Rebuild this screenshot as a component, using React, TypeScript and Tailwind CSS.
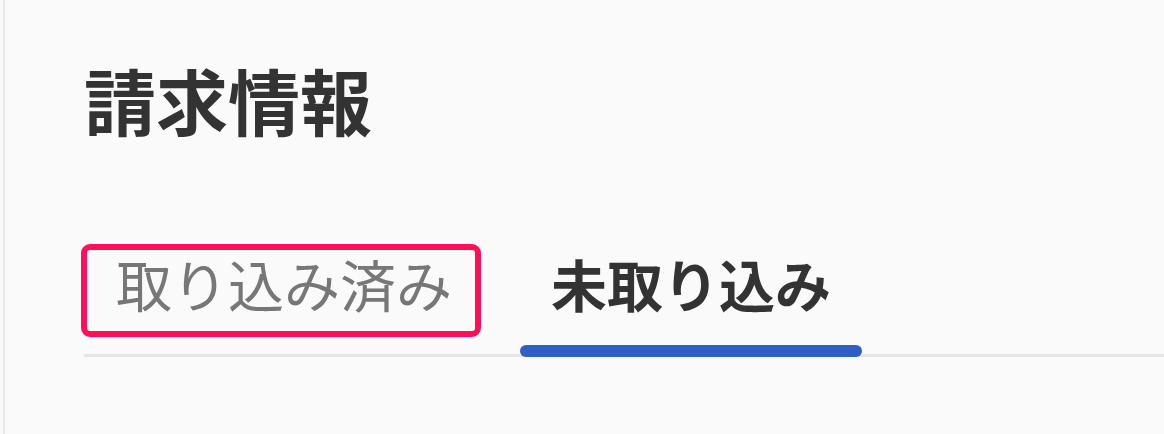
import React, { useState } from 'react';

const tabs = ['取り込み済み', '未取り込み'];

export default function App() {
  const [active, setActive] = useState(1);

  return (
    <div
      className="h-[434px] w-full bg-[#fafafa] overflow-hidden"
      style={{ fontFamily: '"Noto Sans CJK JP", "Noto Sans", sans-serif' }}
    >
      <div className="ml-[3px] h-full border-l-2 border-[#ebebeb] pl-[79px] pt-[63px]">
        <h1 className="text-[72px] font-bold leading-none text-[#333333]">請求情報</h1>

        <div className="mt-[109px] flex items-end border-b-[3px] border-[#e6e6e6]">
          {tabs.map((label, i) => {
            const selected = i === active;
            if (i === 0) {
              // highlighted tab with the red frame
              return (
                <button
                  key={label}
                  onClick={() => setActive(i)}
                  className="-ml-[3px] mb-[17px] rounded-[9px] border-[6px] border-[#ff0f57] pt-[5px] pb-[20px] pl-[29px] pr-[23px] text-[56px] leading-none text-[#777777]"
                >
                  {label}
                </button>
              );
            }
            return (
              <button
                key={label}
                onClick={() => setActive(i)}
                className="ml-[39px] -mb-[3px] flex flex-col"
              >
                <span
                  className={
                    'px-[31px] text-[56px] leading-none ' +
                    (selected ? 'font-bold text-[#333333]' : 'text-[#777777]')
                  }
                >
                  {label}
                </span>
                <span
                  className={
                    'mt-[34px] h-3 w-full rounded-full ' + (selected ? 'bg-[#2e5ec6]' : 'bg-transparent')
                  }
                />
              </button>
            );
          })}
        </div>
      </div>
    </div>
  );
}
